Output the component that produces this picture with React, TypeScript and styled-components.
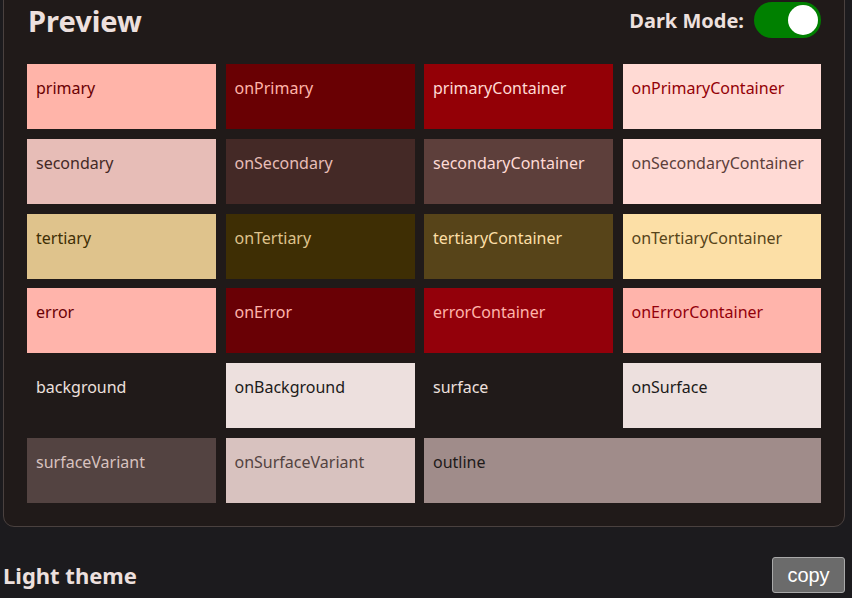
import React, { useState } from 'react'
import styled, { createGlobalStyle } from 'styled-components'

const GlobalStyle = createGlobalStyle`
	html, body {
		margin: 0;
		padding: 0;
		background: #1c1b1e;
	}
	html {
		overflow: hidden;
	}
	body {
		font-family: "Segoe UI", "Noto Sans", "Open Sans", sans-serif;
	}
`

const Page = styled.div`
	display: flow-root;
	padding: 0 7px 0 3px;
	width: 852px;
	box-sizing: border-box;
`

const Card = styled.section`
	margin-top: -14px;
	background: #201a19;
	border: 1px solid #4a413f;
	border-radius: 11px;
	padding: 14px 23px 23px 23px;
`

const Header = styled.div`
	display: flex;
	align-items: center;
	justify-content: space-between;
	height: 38px;
	margin-bottom: 25px;
`

const Title = styled.h1`
	margin: 0;
	padding-left: 1px;
	font-size: 29px;
	font-weight: 700;
	color: #ede0de;
`

const ModeLabel = styled.label`
	display: flex;
	align-items: center;
	gap: 10px;
	font-size: 20px;
	font-weight: 700;
	color: #ede0de;
	cursor: pointer;
`

const Track = styled.span<{ $on: boolean }>`
	position: relative;
	display: block;
	width: 67px;
	height: 36px;
	border-radius: 18px;
	background: ${({ $on }) => ($on ? '#008000' : '#777')};
`

const Knob = styled.span<{ $on: boolean }>`
	position: absolute;
	top: 3px;
	left: ${({ $on }) => ($on ? '34px' : '3px')};
	width: 30px;
	height: 30px;
	border-radius: 50%;
	background: #fff;
`

const Grid = styled.div`
	display: grid;
	grid-template-columns: 189px 189px 189px 1fr;
	grid-auto-rows: 65px;
	column-gap: 9.5px;
	row-gap: 9.8px;
`

const Swatch = styled.div<{ $bg: string; $fg: string; $span?: number }>`
	background: ${({ $bg }) => $bg};
	color: ${({ $fg }) => $fg};
	grid-column: span ${({ $span }) => $span || 1};
	padding: 13px 9px 11px;
	font-size: 16px;
	line-height: 22px;
`

const Footer = styled.div`
	display: flex;
	align-items: center;
	justify-content: space-between;
	margin-top: 30px;
	height: 36px;
`

const SubTitle = styled.h2`
	margin: 0;
	font-size: 22px;
	font-weight: 700;
	color: #ede0de;
`

const CopyButton = styled.button`
	width: 73px;
	height: 36px;
	background: #6b6b6b;
	border: 1px solid #a9a9a9;
	border-radius: 3px;
	color: #fff;
	font-family: "Liberation Sans", Arial, sans-serif;
	font-size: 20px;
	padding: 2px 0 0;
`

const swatches: { name: string; bg: string; fg: string; span?: number }[] = [
	{ name: 'primary', bg: '#ffb4a9', fg: '#690003' },
	{ name: 'onPrimary', bg: '#690003', fg: '#ffb4a9' },
	{ name: 'primaryContainer', bg: '#930006', fg: '#ffdad4' },
	{ name: 'onPrimaryContainer', bg: '#ffdad4', fg: '#930006' },
	{ name: 'secondary', bg: '#e7bdb7', fg: '#442926' },
	{ name: 'onSecondary', bg: '#442926', fg: '#e7bdb7' },
	{ name: 'secondaryContainer', bg: '#5d3f3b', fg: '#ffdad5' },
	{ name: 'onSecondaryContainer', bg: '#ffdad5', fg: '#5d3f3b' },
	{ name: 'tertiary', bg: '#dfc38c', fg: '#3e2e04' },
	{ name: 'onTertiary', bg: '#3e2e04', fg: '#dfc38c' },
	{ name: 'tertiaryContainer', bg: '#574419', fg: '#fcdfa6' },
	{ name: 'onTertiaryContainer', bg: '#fcdfa6', fg: '#574419' },
	{ name: 'error', bg: '#ffb4ab', fg: '#690005' },
	{ name: 'onError', bg: '#690005', fg: '#ffb4ab' },
	{ name: 'errorContainer', bg: '#93000a', fg: '#ffb4ab' },
	{ name: 'onErrorContainer', bg: '#ffb4ab', fg: '#93000a' },
	{ name: 'background', bg: '#201a19', fg: '#ede0de' },
	{ name: 'onBackground', bg: '#ede0de', fg: '#201a19' },
	{ name: 'surface', bg: '#201a19', fg: '#ede0de' },
	{ name: 'onSurface', bg: '#ede0de', fg: '#201a19' },
	{ name: 'surfaceVariant', bg: '#534341', fg: '#d8c2bf' },
	{ name: 'onSurfaceVariant', bg: '#d8c2bf', fg: '#534341' },
	{ name: 'outline', bg: '#a08c8a', fg: '#201a19', span: 2 },
]

export default function App() {
	const [dark, setDark] = useState(true)
	return (
		<Page>
			<GlobalStyle />
			<Card>
				<Header>
					<Title>Preview</Title>
					<ModeLabel onClick={() => setDark(!dark)}>
						Dark Mode:
						<Track $on={dark}>
							<Knob $on={dark} />
						</Track>
					</ModeLabel>
				</Header>
				<Grid>
					{swatches.map((s) => (
						<Swatch key={s.name} $bg={s.bg} $fg={s.fg} $span={s.span}>
							{s.name}
						</Swatch>
					))}
				</Grid>
			</Card>
			<Footer>
				<SubTitle>Light theme</SubTitle>
				<CopyButton>copy</CopyButton>
			</Footer>
		</Page>
	)
}
